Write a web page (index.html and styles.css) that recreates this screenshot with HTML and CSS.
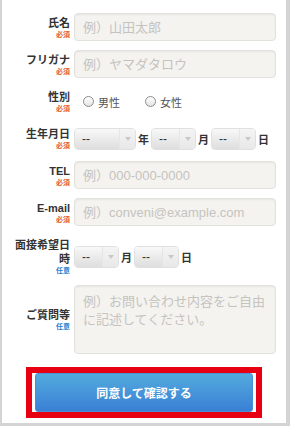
FILE: index.html
```html
<!DOCTYPE html>
<html lang="ja">
<head>
  <meta charset="UTF-8">
  <meta name="viewport" content="width=device-width, initial-scale=1.0">
  <title>お問い合わせ</title>
  <link rel="stylesheet" href="styles.css">
</head>
<body>
  <div class="page">
    <form class="form">
      <div class="row">
        <div class="label"><span class="name">氏名</span><span class="req">必須</span></div>
        <div class="field"><input type="text" class="text" placeholder="例）山田太郎"></div>
      </div>
      <div class="row">
        <div class="label"><span class="name">フリガナ</span><span class="req">必須</span></div>
        <div class="field"><input type="text" class="text" placeholder="例）ヤマダタロウ"></div>
      </div>
      <div class="row row-choice">
        <div class="label"><span class="name">性別</span><span class="req">必須</span></div>
        <div class="field radios">
          <label class="radio"><span class="dot"></span>男性</label>
          <label class="radio"><span class="dot"></span>女性</label>
        </div>
      </div>
      <div class="row row-date">
        <div class="label"><span class="name">生年月日</span><span class="req">必須</span></div>
        <div class="field dates">
          <div class="select select-year"><span class="value">--</span><span class="arrow"></span></div>
          <span class="unit">年</span>
          <div class="select"><span class="value">--</span><span class="arrow"></span></div>
          <span class="unit">月</span>
          <div class="select"><span class="value">--</span><span class="arrow"></span></div>
          <span class="unit">日</span>
        </div>
      </div>
      <div class="row">
        <div class="label"><span class="name">TEL</span><span class="req">必須</span></div>
        <div class="field"><input type="tel" class="text" placeholder="例）000-000-0000"></div>
      </div>
      <div class="row">
        <div class="label"><span class="name">E-mail</span><span class="req">必須</span></div>
        <div class="field"><input type="email" class="text" placeholder="例）conveni@example.com"></div>
      </div>
      <div class="row row-interview">
        <div class="label"><span class="name">面接希望日時</span><span class="opt">任意</span></div>
        <div class="field dates">
          <div class="select"><span class="value">--</span><span class="arrow"></span></div>
          <span class="unit">月</span>
          <div class="select"><span class="value">--</span><span class="arrow"></span></div>
          <span class="unit">日</span>
        </div>
      </div>
      <div class="row">
        <div class="label"><span class="name">ご質問等</span><span class="opt">任意</span></div>
        <div class="field"><textarea class="text area" placeholder="例）お問い合わせ内容をご自由に記述してください。"></textarea></div>
      </div>
      <div class="submit">
        <button type="button" class="btn">同意して確認する</button>
      </div>
    </form>
  </div>
</body>
</html>
```

FILE: styles.css
```css
* {
  box-sizing: border-box;
}
body {
  margin: 0;
  font-family: "Liberation Sans", "Noto Sans CJK JP", sans-serif;
  color: #333;
}
.page {
  width: 290px;
  height: 426px;
  background-color: #fff;
  border-left: 2px solid #d4d4d4;
  border-right: 4px solid #d4d4d4;
  border-bottom: 3px solid #d4d4d4;
  padding-top: 13px;
}
.row {
  display: flex;
  align-items: center;
  margin-bottom: 9px;
}
.row-choice {
  padding: 3px 0;
}
.row-date {
  padding: 2px 0;
}
.row-interview {
  padding: 3px 0 1px;
}
.label {
  width: 68px;
  padding-left: 12px;
  text-align: right;
  display: flex;
  flex-direction: column;
  align-items: flex-end;
}
.label .name {
  font-size: 11px;
  line-height: 14px;
  font-weight: bold;
  color: #333;
}
.label .req,
.label .opt {
  font-size: 7px;
  line-height: 9px;
  font-weight: bold;
}
.label .req {
  color: #e2602a;
}
.label .opt {
  color: #2b7dd0;
}
.field {
  width: 202px;
  margin-left: 4px;
}
.text {
  display: block;
  width: 100%;
  height: 28px;
  padding: 0 8px;
  font-family: inherit;
  font-size: 13px;
  color: #333;
  background-color: #f4f3f0;
  border: 1px solid #e3e1dc;
  border-radius: 4px;
  box-shadow: inset 0 1px 2px rgba(0, 0, 0, 0.06);
  outline: none;
}
.text::placeholder {
  color: #c6c3be;
}
.area {
  height: 69px;
  padding: 7px 8px;
  line-height: 18px;
  resize: none;
}
.radios {
  display: flex;
  align-items: center;
  padding-left: 9px;
  gap: 25px;
}
.radio {
  display: flex;
  align-items: center;
  gap: 4px;
  font-size: 11px;
  color: #555;
}
.dot {
  width: 11px;
  height: 11px;
  border: 1px solid #8d8d8d;
  border-radius: 50%;
  background: linear-gradient(#ffffff, #e4e4e4);
}
.dates {
  display: flex;
  align-items: center;
}
.select {
  display: flex;
  width: 45px;
  height: 22px;
  border: 1px solid #e0e0e0;
  border-radius: 4px;
  overflow: hidden;
}
.select-year {
  width: 62px;
}
.select .value {
  flex: 1;
  padding-left: 7px;
  font-size: 12px;
  line-height: 20px;
  color: #333;
  background: linear-gradient(#f8f8f8, #dedede);
}
.select .arrow {
  width: 16px;
  position: relative;
  background: linear-gradient(#f4f4f4, #e8e8e8);
  border-left: 1px solid #e6e6e6;
}
.select .arrow::after {
  content: "";
  position: absolute;
  left: 5px;
  top: 8px;
  border-left: 3px solid transparent;
  border-right: 3px solid transparent;
  border-top: 4px solid #c8c8c8;
}
.unit {
  margin: 0 2px;
  font-size: 11px;
  font-weight: bold;
  color: #333;
}
.submit {
  width: 236px;
  margin: 13px auto 0;
  padding: 0 3px;
  border: 6px solid #e60012;
}
.btn {
  display: block;
  width: 100%;
  height: 39px;
  font-family: inherit;
  font-size: 12px;
  font-weight: bold;
  color: #fff;
  background: linear-gradient(#53abdd, #3a7fd5);
  border: 1px solid #4a90d6;
  border-radius: 3px;
  cursor: pointer;
}
```
